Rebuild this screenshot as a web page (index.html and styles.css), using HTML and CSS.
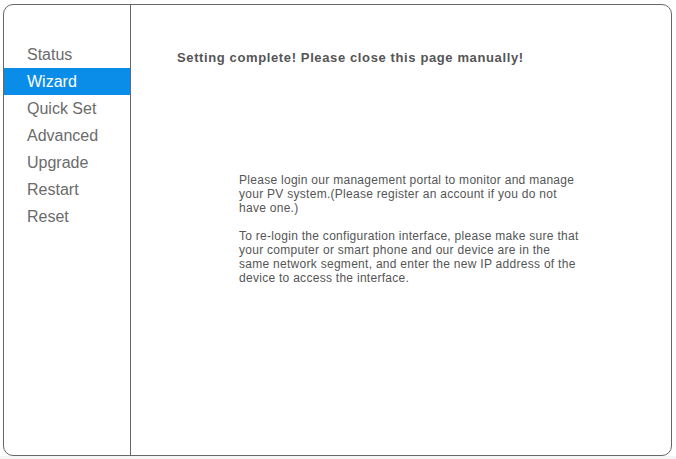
FILE: index.html
```html
<!DOCTYPE html>
<html>
<head>
<meta charset="utf-8">
<link rel="stylesheet" href="styles.css">
</head>
<body>
<div class="frame">
  <nav class="sidebar">
    <ul class="menu">
      <li class="item">Status</li>
      <li class="item active">Wizard</li>
      <li class="item">Quick Set</li>
      <li class="item">Advanced</li>
      <li class="item">Upgrade</li>
      <li class="item">Restart</li>
      <li class="item">Reset</li>
    </ul>
  </nav>
  <main class="content">
    <h1 class="title">Setting complete! Please close this page manually!</h1>
    <div class="notes">
      <p class="note">Please login our management portal to monitor and manage your PV system.(Please register an account if you do not have one.)</p>
      <p class="note">To re-login the configuration interface, please make sure that your computer or smart phone and our device are in the same network segment, and enter the new IP address of the device to access the interface.</p>
    </div>
  </main>
</div>
</body>
</html>
```
FILE: styles.css
```css
html, body {
  margin: 0;
  padding: 0;
  background: #ffffff;
  font-family: Arial, "Liberation Sans", sans-serif;
}
body {
  padding: 4px 0 0 3px;
  height: 459px;
  box-sizing: border-box;
  background: linear-gradient(#ffffff 456px, #f5f5f5 456px);
}
.frame {
  width: 669px;
  height: 452px;
  box-sizing: border-box;
  border: 1px solid #666666;
  border-radius: 10px;
  display: flex;
  background: #ffffff;
  overflow: hidden;
}
.sidebar {
  width: 127px;
  flex: none;
  box-sizing: border-box;
  border-right: 1px solid #666666;
}
.menu {
  list-style: none;
  margin: 0;
  padding: 36px 0 0 0;
}
.item {
  height: 27px;
  line-height: 27px;
  padding-left: 23px;
  font-size: 16px;
  color: #6b6b6b;
}
.item.active {
  background: #0a8ce9;
  color: #ffffff;
}
.content {
  flex: 1;
  padding: 45px 0 0 46px;
}
.title {
  margin: 0;
  font-size: 13px;
  font-weight: bold;
  line-height: 16px;
  letter-spacing: 0.62px;
  color: #555555;
}
.notes {
  margin: 107px 0 0 62px;
  width: 344px;
}
.note {
  margin: 0 0 14px 0;
  font-size: 12px;
  line-height: 14px;
  letter-spacing: 0.28px;
  color: #555555;
}
```
